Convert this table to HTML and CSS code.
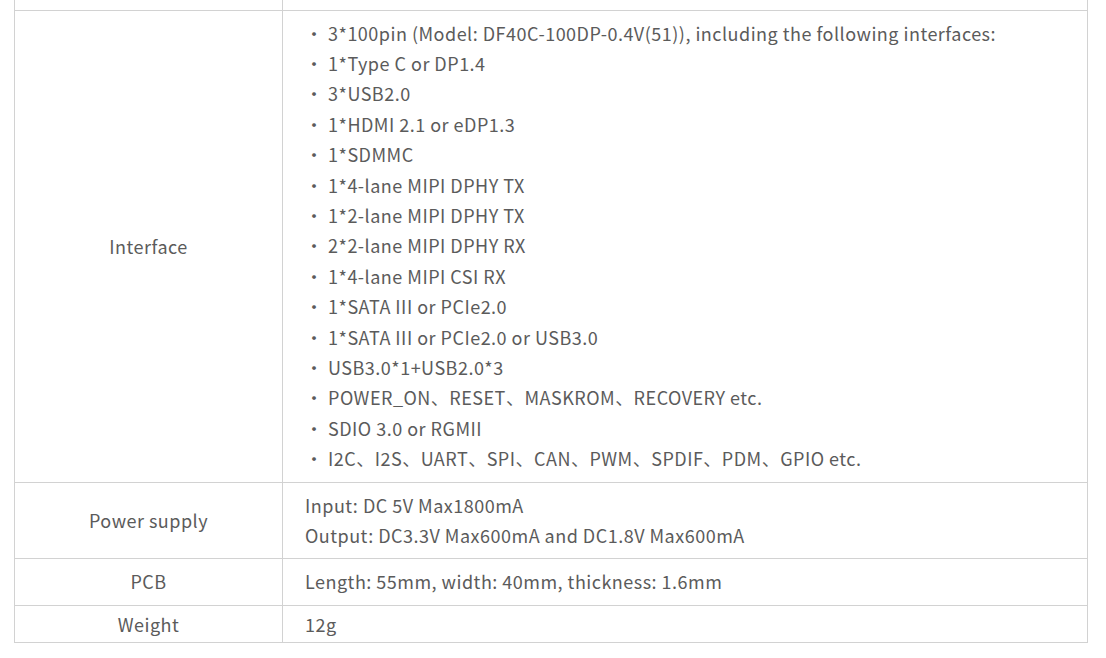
FILE: index.html
```html
<!DOCTYPE html>
<html lang="en">
<head>
<meta charset="utf-8">
<title>Specifications</title>
<link rel="stylesheet" href="styles.css">
</head>
<body>
<table class="spec">
  <colgroup><col class="c-name"><col class="c-value"></colgroup>
  <tbody>
    <tr class="cut"><td></td><td></td></tr>
    <tr>
      <td class="name">Interface</td>
      <td class="value list-cell">
        <ul class="items">
          <li>3*100pin (Model: DF40C-100DP-0.4V(51)), including the following interfaces:</li>
          <li>1*Type C or DP1.4</li>
          <li>3*USB2.0</li>
          <li>1*HDMI 2.1 or eDP1.3</li>
          <li>1*SDMMC</li>
          <li>1*4-lane MIPI DPHY TX</li>
          <li>1*2-lane MIPI DPHY TX</li>
          <li>2*2-lane MIPI DPHY RX</li>
          <li>1*4-lane MIPI CSI RX</li>
          <li>1*SATA III or PCIe2.0</li>
          <li>1*SATA III or PCIe2.0 or USB3.0</li>
          <li>USB3.0*1+USB2.0*3</li>
          <li>POWER_ON、RESET、MASKROM、RECOVERY etc.</li>
          <li>SDIO 3.0 or RGMII</li>
          <li>I2C、I2S、UART、SPI、CAN、PWM、SPDIF、PDM、GPIO etc.</li>
        </ul>
      </td>
    </tr>
    <tr class="power">
      <td class="name">Power supply</td>
      <td class="value">Input: DC 5V Max1800mA<br>Output: DC3.3V Max600mA and DC1.8V Max600mA</td>
    </tr>
    <tr>
      <td class="name">PCB</td>
      <td class="value">Length: 55mm, width: 40mm, thickness: 1.6mm</td>
    </tr>
    <tr class="tight">
      <td class="name">Weight</td>
      <td class="value">12g</td>
    </tr>
  </tbody>
</table>
</body>
</html>
```
FILE: styles.css
```css
html, body {
  margin: 0;
  padding: 0;
  background: #fff;
}
body {
  font-family: "Noto Sans CJK SC", "Noto Sans", sans-serif;
  font-size: 18px;
  line-height: 30.4px;
  letter-spacing: 0.49px;
  color: #5b5b5b;
}
.spec {
  border-collapse: collapse;
  width: 1074px;
  margin-left: 14px;
  table-layout: fixed;
}
.c-name { width: 268px; }
.spec td {
  border: 1px solid #d2d2d2;
  padding: 7px 22px 8px;
  vertical-align: middle;
}
.spec .name {
  text-align: center;
}
.spec .value {
  text-align: left;
}
.spec .cut td {
  border-top: 0;
  height: 10px;
  padding: 0;
}
.spec .list-cell {
  padding-top: 6.5px;
  padding-bottom: 8.5px;
}
.spec .power td {
  line-height: 30px;
}
.spec .tight td {
  padding-top: 3px;
  padding-bottom: 3.4px;
}
.items {
  list-style: none;
  margin: 0;
  padding: 0;
}
.items li::before {
  content: "・";
  margin-right: 4.5px;
}
```
